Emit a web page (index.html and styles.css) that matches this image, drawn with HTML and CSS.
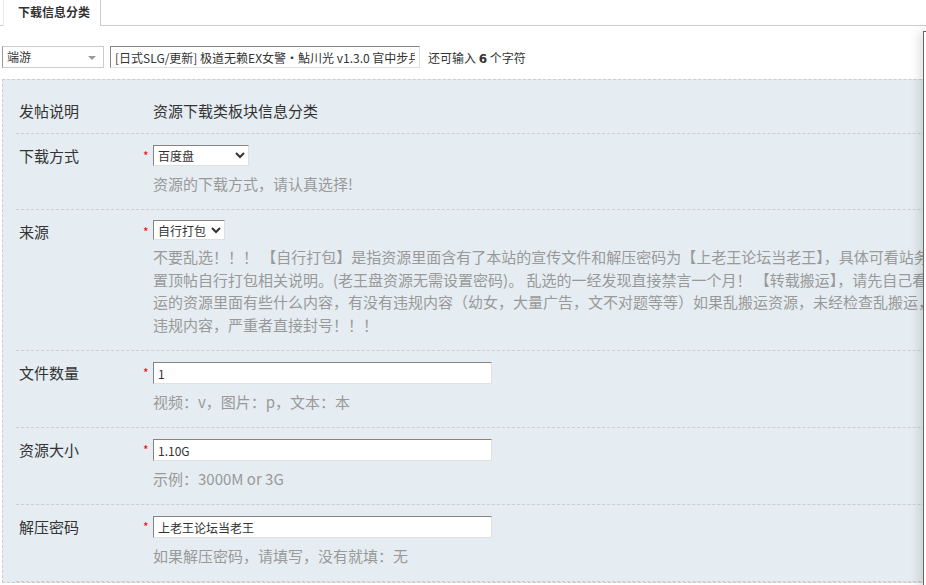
FILE: index.html
```html
<!DOCTYPE html>
<html lang="zh-CN">
<head>
    <meta charset="UTF-8">
    <meta name="viewport" content="width=device-width, initial-scale=1.0">
    <title>下载信息分类</title>
    <link rel="stylesheet" href="styles.css">
</head>
<body>
<div class="page">
    <div class="tabs">
        <a class="tab current">下载信息分类</a>
    </div>

    <div class="subject-row">
        <div class="fake-select">端游<span class="tri"></span></div>
        <input class="px subject" type="text" value="[日式SLG/更新] 极道无赖EX女警・鮎川光 v1.3.0 官中步兵版+存档[新作/CV]">
        <span class="count">还可输入 <strong>6</strong> 个字符</span>
    </div>

    <div class="exfm">
        <div class="row">
            <div class="th">发帖说明</div>
            <div class="rq"></div>
            <div class="td"><div class="desc">资源下载类板块信息分类</div></div>
        </div>
        <div class="row">
            <div class="th">下载方式</div>
            <div class="rq">*</div>
            <div class="td">
                <select class="ps sel-pan">
                    <option>百度盘</option>
                    <option>老王盘</option>
                </select>
                <div class="tip">资源的下载方式，请认真选择!</div>
            </div>
        </div>
        <div class="row">
            <div class="th">来源</div>
            <div class="rq">*</div>
            <div class="td">
                <select class="ps sel-src">
                    <option>自行打包</option>
                    <option>转载搬运</option>
                </select>
                <div class="tip long">不要乱选！！！ 【自行打包】是指资源里面含有了本站的宣传文件和解压密码为【上老王论坛当老王】，具体可看站务区<br>置顶帖自行打包相关说明。(老王盘资源无需设置密码)。 乱选的一经发现直接禁言一个月！ 【转载搬运】，请先自己看看所搬<br>运的资源里面有些什么内容，有没有违规内容（幼女，大量广告，文不对题等等）如果乱搬运资源，未经检查乱搬运，发现有<br>违规内容，严重者直接封号！！！</div>
            </div>
        </div>
        <div class="row">
            <div class="th">文件数量</div>
            <div class="rq">*</div>
            <div class="td">
                <input class="px field" type="text" value="1">
                <div class="tip">视频：v，图片：p，文本：本</div>
            </div>
        </div>
        <div class="row">
            <div class="th">资源大小</div>
            <div class="rq">*</div>
            <div class="td">
                <input class="px field" type="text" value="1.10G">
                <div class="tip">示例：3000M or 3G</div>
            </div>
        </div>
        <div class="row">
            <div class="th">解压密码</div>
            <div class="rq">*</div>
            <div class="td">
                <input class="px field" type="text" value="上老王论坛当老王">
                <div class="tip">如果解压密码，请填写，没有就填：无</div>
            </div>
        </div>
    </div>

    <div class="side-pop"></div>
</div>
</body>
</html>
```

FILE: styles.css
```css
html, body { margin: 0; padding: 0; }
body { background: #fff; color: #333; font: 12px "Noto Sans CJK SC", "Microsoft YaHei", sans-serif; }
.page { position: relative; width: 926px; height: 585px; overflow: hidden; }

.tabs { height: 25px; border-bottom: 1px solid #ccc; padding-left: 3px; display: flex; align-items: flex-end; }
.tab { display: block; height: 26px; margin-bottom: -1px; box-sizing: border-box; width: 98px; padding-left: 14px; line-height: 24px; font-weight: bold; color: #333; background: #fff; border: 1px solid #ccc; border-top: 0; border-bottom: 0; border-left-color: #e6e6e6; }

.subject-row { display: flex; align-items: center; gap: 6px; padding: 20px 0 0 2px; height: 22px; }
.fake-select { position: relative; flex: none; width: 102px; height: 22px; box-sizing: border-box; border: 1px solid #ccc; border-left-color: #999; background: #fff; padding-left: 4px; line-height: 20px; }
.fake-select .tri { position: absolute; right: 7px; top: 9px; border: 4px solid transparent; border-top: 4px solid #999; border-bottom: 0; }
.px { box-sizing: border-box; height: 22px; padding: 0 4px; border: 1px solid; border-color: #848484 #e0e0e0 #e0e0e0 #848484; background: #fff; font: 12px "Noto Sans CJK SC", sans-serif; color: #333; outline: none; }
.subject { flex: none; width: 310px; }
.count { flex: none; margin-left: 2px; color: #333; }
.count strong { font-family: "DejaVu Sans", sans-serif; font-size: 12px; }

.exfm { margin: 11px 0 0 2px; width: 1100px; padding: 9px 0 0 13px; border: 1px dashed #cdcdcd; background: #e5edf2; font-size: 15px; }
.row { display: grid; grid-template-columns: 124px 13px 1fr; border-bottom: 1px dashed #cdcdcd; padding: 11px 0 14px; }
.row:first-child { padding: 11px 0; }
.th { padding-left: 3px; line-height: 22px; color: #333; }
.rq { color: #f00; font-size: 12px; line-height: 18px; padding: 2px 0 0 3px; }
.desc { line-height: 22px; }
.tip { margin-top: 6px; line-height: 23px; color: #999; }
.tip.long { line-height: 22.5px; white-space: nowrap; }

.ps { box-sizing: border-box; height: 21px; border: 1px solid; border-color: #848484 #e0e0e0 #e0e0e0 #848484; border-radius: 0; background: #fff; font: 12px "Noto Sans CJK SC", sans-serif; color: #333; display: block; }
.sel-pan { width: 96px; }
.sel-src { width: 72px; height: 20px; margin-top: -1px; margin-bottom: 1px; }
.field { width: 339px; display: block; }

.side-pop { position: absolute; left: 923px; top: 31px; width: 40px; height: 600px; background: #fff; border: 1px solid #666; box-shadow: -4px 0 10px rgba(0, 0, 0, 0.12); }
```
